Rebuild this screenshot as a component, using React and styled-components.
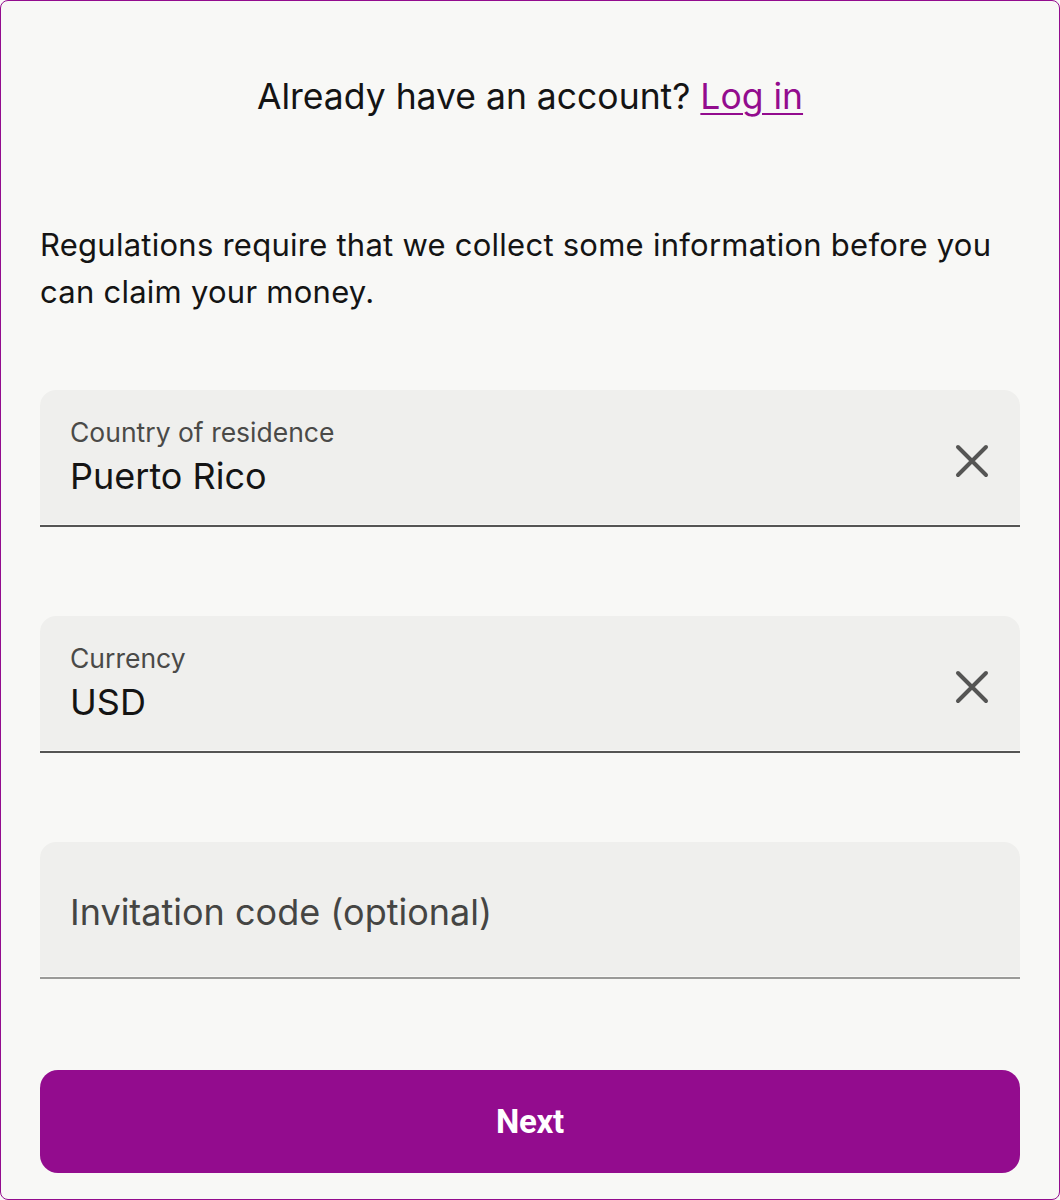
import React from "react";
import styled, { createGlobalStyle } from "styled-components";

const Global = createGlobalStyle`
  html, body { margin: 0; padding: 0; background: #f8f8f6; }
  * { box-sizing: border-box; }
`;

const Page = styled.div`
  width: 1060px;
  height: 1200px;
  border: 1px solid #930c8e;
  border-radius: 8px;
  background: #f8f8f6;
  padding: 0 39px;
  display: flex;
  flex-direction: column;
  font-family: Inter, "Noto Sans", sans-serif;
  color: #141414;
`;

const Header = styled.div`
  padding-top: 74px;
  text-align: center;
  font-size: 35.5px;
  line-height: 44px;
`;

const Link = styled.a`
  color: #930c8e;
  text-decoration: underline;
  text-underline-offset: 4px;
  text-decoration-thickness: 2px;
`;

const Intro = styled.p`
  margin: 102px 0 0;
  font-size: 31px;
  line-height: 47px;
  letter-spacing: 0.25px;
`;

const Fields = styled.div`
  margin-top: 75px;
  display: flex;
  flex-direction: column;
  gap: 89px;
`;

const Field = styled.div`
  height: 137px;
  background: #efefed;
  border-radius: 16px 16px 0 0;
  border-bottom: 2px solid ${(p) => (p.$muted ? "#9a9a98" : "#555554")};
  box-shadow: inset 0 -1px 0 #f8f8f6;
  padding: 0 30px;
  display: flex;
  align-items: center;
  justify-content: space-between;
`;

const FieldText = styled.div`
  display: flex;
  flex-direction: column;
  gap: 4px;
`;

const Label = styled.span`
  font-size: 26.5px;
  line-height: 32px;
  color: #4a4a48;
`;

const Value = styled.span`
  font-size: 36px;
  line-height: 48px;
  color: #141414;
`;

const Placeholder = styled.span`
  font-size: 36px;
  line-height: 48px;
  margin-top: 5px;
  color: #454543;
`;

const ClearButton = styled.button`
  border: none;
  background: transparent;
  padding: 0;
  margin: 7px 0 0 0;
  width: 36px;
  height: 36px;
  display: flex;
  align-items: center;
  justify-content: center;
  cursor: pointer;
`;

const NextButton = styled.button`
  margin-top: 91px;
  height: 103px;
  width: 100%;
  border: none;
  border-radius: 18px;
  background: #930c8e;
  color: #ffffff;
  font-family: Roboto, "Liberation Sans", sans-serif;
  font-weight: 700;
  font-size: 33px;
  letter-spacing: -0.3px;
  cursor: pointer;
`;

const XIcon = () => (
  <svg width="34" height="34" viewBox="0 0 34 34" fill="none">
    <path d="M3 3L31 31M31 3L3 31" stroke="#555554" strokeWidth="4" strokeLinecap="round" />
  </svg>
);

export default function App() {
  return (
    <>
      <Global />
      <Page>
        <Header>
          Already have an account? <Link href="#">Log in</Link>
        </Header>
        <Intro>
          Regulations require that we collect some information before you can claim your money.
        </Intro>
        <Fields>
          <Field>
            <FieldText>
              <Label>Country of residence</Label>
              <Value>Puerto Rico</Value>
            </FieldText>
            <ClearButton aria-label="Clear">
              <XIcon />
            </ClearButton>
          </Field>
          <Field>
            <FieldText>
              <Label>Currency</Label>
              <Value>USD</Value>
            </FieldText>
            <ClearButton aria-label="Clear">
              <XIcon />
            </ClearButton>
          </Field>
          <Field $muted>
            <Placeholder>Invitation code (optional)</Placeholder>
          </Field>
        </Fields>
        <NextButton>Next</NextButton>
      </Page>
    </>
  );
}
